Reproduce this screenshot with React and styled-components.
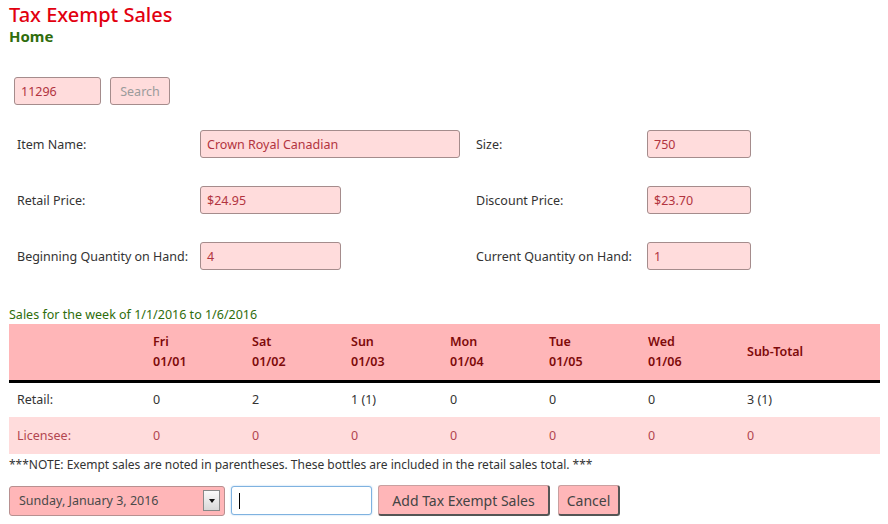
import React from "react";
import styled, { createGlobalStyle } from "styled-components";

const Global = createGlobalStyle`
  html, body { margin: 0; padding: 0; background: #fff; }
  body { font-family: "Noto Sans", "DejaVu Sans", sans-serif; color: #333; }
  * { box-sizing: border-box; }
`;

const Page = styled.div`
  width: 888px;
  height: 524px;
  padding: 3px 8px 0 9px;
  overflow: hidden;
`;

const Title = styled.h1`
  margin: 0;
  font-size: 20px;
  line-height: 24px;
  font-weight: 500;
  color: #e2000f;
`;

const HomeLink = styled.a`
  display: block;
  font-size: 15px;
  line-height: 18px;
  font-weight: 700;
  color: #2f6d0c;
  text-decoration: none;
`;

const SearchRow = styled.div`
  display: flex;
  gap: 9px;
  margin: 32px 0 0 5px;
`;

const Field = styled.div`
  height: 28px;
  width: ${(p) => p.$w}px;
  background: #ffdcdc;
  border: 1px solid #a58c8c;
  border-radius: 3px;
  color: #b23440;
  font-size: 12.5px;
  display: flex;
  align-items: center;
  padding-left: 6px;
`;

const SearchButton = styled.button`
  height: 28px;
  width: 60px;
  background: #ffdcdc;
  border: 1px solid #a58c8c;
  border-radius: 3px;
  color: #9b9b9b;
  font-family: inherit;
  font-size: 12.5px;
  padding: 0;
`;

const FormGrid = styled.div`
  display: grid;
  grid-template-columns: 191px 276px 171px auto;
  row-gap: 28px;
  margin-top: 25px;
  align-items: center;
`;

const Label = styled.div`
  font-size: 12.5px;
  color: #333;
  padding-left: ${(p) => p.$pad}px;
`;

const WeekCaption = styled.div`
  margin-top: 37px;
  font-size: 12.5px;
  line-height: 16px;
  color: #2f6d0c;
`;

const Table = styled.table`
  width: 871px;
  border-collapse: collapse;
  margin-top: 1px;
  font-size: 12.5px;
  table-layout: fixed;
`;

const HeadRow = styled.tr`
  background: #ffb6b8;
  border-bottom: 3px solid #000;
`;

const Th = styled.th`
  height: 57px;
  text-align: left;
  font-weight: 600;
  color: #7e0a0a;
  padding: 0 8px;
  line-height: 20px;
  width: ${(p) => p.$w}px;
`;

const BodyRow = styled.tr`
  background: ${(p) => (p.$alt ? "#ffdcdc" : "#fff")};
  color: ${(p) => (p.$alt ? "#b24650" : "#333")};
`;

const Td = styled.td`
  height: ${(p) => (p.$tall ? 37 : 36)}px;
  padding: 0 8px;
`;

const Note = styled.div`
  font-size: 12px;
  line-height: 16px;
  margin-top: 3px;
  color: #333;
`;

const ActionRow = styled.div`
  display: flex;
  align-items: center;
  margin-top: 12px;
  gap: 6px;
`;

const DateSelect = styled.div`
  width: 216px;
  height: 30px;
  background: #ffb6b8;
  border: 1px solid #b89090;
  border-radius: 3px;
  display: flex;
  align-items: center;
  justify-content: space-between;
  padding: 0 4px 0 9px;
  font-size: 12.5px;
  color: #4a4a4a;
`;

const SelectArrow = styled.span`
  width: 17px;
  height: 21px;
  border: 1px solid #888;
  background: linear-gradient(#fafafa, #d8d8d8);
  display: flex;
  align-items: center;
  justify-content: center;
  &::after {
    content: "";
    border-left: 3.5px solid transparent;
    border-right: 3.5px solid transparent;
    border-top: 4px solid #111;
  }
`;

const TextBox = styled.div`
  width: 141px;
  height: 29px;
  border: 1px solid #7fb2e0;
  border-radius: 3px;
  background: #fff;
  display: flex;
  align-items: center;
  padding-left: 7px;
  box-shadow: 0 0 2px #a9cdf0;
`;

const Caret = styled.span`
  width: 1px;
  height: 16px;
  background: #000;
`;

const ActionButton = styled.button`
  height: 31px;
  width: ${(p) => p.$w}px;
  margin-left: ${(p) => p.$ml || 0}px;
  background: #ffb6b8;
  border: 1px solid #c9a0a0;
  border-right: 2px solid #555;
  border-bottom: 2px solid #555;
  border-radius: 3px;
  font-family: inherit;
  font-size: 14px;
  color: #444;
  padding: 0;
`;

const days = [
  ["Fri", "01/01"],
  ["Sat", "01/02"],
  ["Sun", "01/03"],
  ["Mon", "01/04"],
  ["Tue", "01/05"],
  ["Wed", "01/06"],
];

const retail = ["0", "2", "1 (1)", "0", "0", "0", "3 (1)"];
const licensee = ["0", "0", "0", "0", "0", "0", "0"];

export default function App() {
  return (
    <>
      <Global />
      <Page>
        <Title>Tax Exempt Sales</Title>
        <HomeLink href="#">Home</HomeLink>

        <SearchRow>
          <Field $w={87}>11296</Field>
          <SearchButton>Search</SearchButton>
        </SearchRow>

        <FormGrid>
          <Label $pad={8}>Item Name:</Label>
          <Field $w={260}>Crown Royal Canadian</Field>
          <Label $pad={0}>Size:</Label>
          <Field $w={104}>750</Field>

          <Label $pad={8}>Retail Price:</Label>
          <Field $w={141}>$24.95</Field>
          <Label $pad={0}>Discount Price:</Label>
          <Field $w={104}>$23.70</Field>

          <Label $pad={8}>Beginning Quantity on Hand:</Label>
          <Field $w={141}>4</Field>
          <Label $pad={0}>Current Quantity on Hand:</Label>
          <Field $w={104}>1</Field>
        </FormGrid>

        <WeekCaption>Sales for the week of 1/1/2016 to 1/6/2016</WeekCaption>
        <Table>
          <thead>
            <HeadRow>
              <Th $w={136}></Th>
              {days.map(([d, n]) => (
                <Th key={d} $w={99}>
                  {d}
                  <br />
                  {n}
                </Th>
              ))}
              <Th>Sub-Total</Th>
            </HeadRow>
          </thead>
          <tbody>
            <BodyRow>
              <Td>Retail:</Td>
              {retail.map((v, i) => (
                <Td key={i}>{v}</Td>
              ))}
            </BodyRow>
            <BodyRow $alt>
              <Td $tall>Licensee:</Td>
              {licensee.map((v, i) => (
                <Td key={i} $tall>{v}</Td>
              ))}
            </BodyRow>
          </tbody>
        </Table>
        <Note>
          ***NOTE: Exempt sales are noted in parentheses. These bottles are included in the retail sales total. ***
        </Note>

        <ActionRow>
          <DateSelect>
            Sunday, January 3, 2016
            <SelectArrow />
          </DateSelect>
          <TextBox>
            <Caret />
          </TextBox>
          <ActionButton $w={172}>Add Tax Exempt Sales</ActionButton>
          <ActionButton $w={62} $ml={2}>Cancel</ActionButton>
        </ActionRow>
      </Page>
    </>
  );
}
